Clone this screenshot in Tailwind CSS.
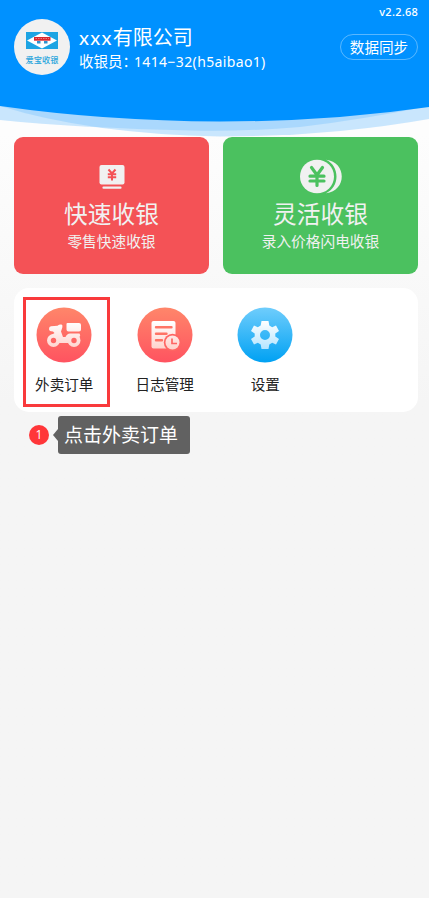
<!DOCTYPE html>
<html lang="zh-CN">
<head>
<meta charset="utf-8">
<meta name="viewport" content="width=device-width, initial-scale=1">
<title>收银</title>
<script src="https://cdn.jsdelivr.net/npm/@tailwindcss/browser@4"></script>
</head>
<body class="relative h-[898px] w-[429px] overflow-hidden bg-linear-to-b from-[#fdfdfd] from-15% to-[#f5f5f5] to-45% font-['Lato','Noto_Sans_CJK_SC',sans-serif]">
<header class="relative h-[137px] text-white">
  <svg class="absolute inset-0" width="429" height="140" viewBox="0 0 429 140">
    <path d="M0 0H429V106Q360 120 300 127Q240 132 190 130.500Q80 128 0 120Z" fill="#80c6fc" fill-opacity=".42"/>
    <path d="M0 0H429V119Q330 136.500 220 136.500Q90 134 0 106Z" fill="#80c6fc" fill-opacity=".42"/>
    <path d="M0 0H429V107Q330 121.500 220 121.500Q105 121 0 106Z" fill="#0091ff"/>
  </svg>
  <div class="relative flex items-start pl-[14px] pt-[19px]">
    <div class="flex size-[56px] shrink-0 flex-col items-center rounded-full bg-[#f1f1f1] pt-[13px]">
      <svg width="32" height="17" viewBox="0 0 32 17">
        <path d="M0 0H32V17H0Z" fill="#1da4e3"/>
        <path d="M1 8.500L16 .5L31 8.500L16 16.500Z" fill="#fff"/>
        <path d="M8 5H24.500V8.700H8Z" fill="#d9282f"/>
        <path d="M9.500 6.500H23" stroke="#ee7f7c" stroke-width="1" stroke-dasharray="1.500 1"/>
        <path d="M11 9H14.500V11.500H11ZM18 9H21.500V11.500H18Z" fill="#2f93d0"/>
      </svg>
      <span class="mt-[6px] text-[8.200px] font-medium leading-[11px] text-[#2aa5dc]">爱宝收银</span>
    </div>
    <div class="ml-[9px] mt-[5px] w-[230px] whitespace-nowrap">
      <div class="flex text-[20px] leading-[26px]"><span class="tracking-[1.300px]">xxx</span><span>有限公司</span></div>
      <div class="mt-[1px] flex text-[14.500px] leading-[22px]"><span class="w-[55px]">收银员：</span><span class="font-['Noto_Sans'] text-[14px] tracking-[.36px]">1414−32(h5aibao1)</span></div>
    </div>
    <div class="ml-auto mr-[11px] flex flex-col items-end">
      <span class="-mt-[15px] font-['Noto_Sans'] text-[11px] font-medium leading-[16px] tracking-[.25px]">v2.2.68</span>
      <button class="mt-[14px] h-[26px] w-[78px] rounded-full border border-white/35 text-[14.600px] leading-[25px]">数据同步</button>
    </div>
  </div>
</header>

<main class="relative pl-[14px] pr-[11px] text-[#f1f1f1]">
  <section class="grid grid-cols-2 gap-[14px]">
    <div class="flex h-[137px] flex-col items-center rounded-[9px] bg-[#f45256] pt-[22px]">
      <svg width="36" height="36" viewBox="0 0 36 36" fill="none">
        <rect x="5.500" y="6" width="25" height="19.500" rx="2" fill="#f1f1f1"/>
        <path d="M9.500 28.700H26.500" stroke="#f1f1f1" stroke-width="2.200" stroke-linecap="round"/>
        <path d="M14.500 10.500L18 14.500L21.500 10.500M18 14.500V21.500M13.800 15.200H22.200M13.800 18.300H22.200" stroke="#f45256" stroke-width="2"/>
      </svg>
      <span class="mt-[2px] text-[23.700px] leading-[34px]">快速收银</span>
      <span class="-mt-[1px] text-[14.700px] leading-[22px]">零售快速收银</span>
    </div>
    <div class="flex h-[137px] flex-col items-center rounded-[9px] bg-[#4bc15f] pt-[22px]">
      <svg width="42" height="36" viewBox="0 0 42 36" fill="none">
        <path d="M26 .8C47 3 47 32 26 34.200C40 28 40 7 26 .8Z" fill="#f1f1f1"/>
        <ellipse cx="17" cy="17.500" rx="17" ry="16.800" fill="#f1f1f1"/>
        <path d="M11.500 8.500L17 16L22.500 8.500M17 16V26.500M10 17.200H24M10 22H24" stroke="#4bc15f" stroke-width="3.200" stroke-linecap="round"/>
      </svg>
      <span class="mt-[2px] text-[23.700px] leading-[34px]">灵活收银</span>
      <span class="-mt-[1px] text-[14.700px] leading-[22px]">录入价格闪电收银</span>
    </div>
  </section>

  <section class="mt-[14px] grid h-[124px] grid-cols-4 rounded-[15px] bg-white pr-[2px] pt-[19px] text-[14.600px] text-[#222]">
    <div class="flex flex-col items-center">
      <svg width="56" height="56" viewBox="0 0 56 56" fill="none">
        <defs>
          <linearGradient id="coral" x2="0" y2="1"><stop stop-color="#ff866a"/><stop offset="1" stop-color="#ff5360"/></linearGradient>
          <linearGradient id="cream" gradientUnits="userSpaceOnUse" x1="0" y1="15" x2="0" y2="42"><stop stop-color="#fff"/><stop offset="1" stop-color="#ffd2cc"/></linearGradient>
        </defs>
        <circle cx="28" cy="28" r="27.500" fill="url(#coral)"/>
        <path d="M31.500 16H43Q45 16 45 18V22.500Q45 24.500 43 24.500H32.500Q30.500 24.500 30.500 22.500V17Q30.500 16 31.500 16ZM15 19.200L21.500 18.700Q23.500 17 25.500 17.500Q27 18 26.300 20.500L25 24.500L27 30H29.500Q31 26.500 34 26.500H43.500Q45 28 43.500 30L44 34H12L12.500 30L18.500 26L17 24.500Q13 24.500 13 22Q13 19.500 15 19.200ZM22 30H33V36H22Z" fill="url(#cream)"/>
        <circle cx="17.500" cy="33.500" r="6.500" fill="url(#cream)"/><circle cx="38" cy="33.500" r="6.500" fill="url(#cream)"/>
        <circle cx="17.500" cy="33.500" r="2.700" fill="#ff6664"/><circle cx="38" cy="33.500" r="2.700" fill="#ff6664"/>
      </svg>
      <span class="mt-[9px] leading-[25px]">外卖订单</span>
    </div>
    <div class="flex flex-col items-center">
      <svg width="56" height="56" viewBox="0 0 56 56" fill="none">
        <circle cx="28" cy="28" r="27.500" fill="url(#coral)"/>
        <path d="M16.500 14H36.500Q38.500 14 38.500 16V41.500H16.500Q14.500 41.500 14.500 39.500V16Q14.500 14 16.500 14Z" fill="url(#cream)"/>
        <path d="M19 20.200H34.500M19 26.700H29.500M19 33.200H25" stroke="#ff7466" stroke-width="2.400" stroke-linecap="round"/>
        <circle cx="35.500" cy="35.500" r="8.700" fill="#ff6563"/>
        <circle cx="35.500" cy="35.500" r="7" fill="url(#cream)"/>
        <path d="M35 31.500V36.500H40" stroke="#ff6563" stroke-width="1.700"/>
      </svg>
      <span class="mt-[9px] leading-[25px]">日志管理</span>
    </div>
    <div class="flex flex-col items-center">
      <svg width="56" height="56" viewBox="0 0 56 56" fill="none">
        <defs>
          <linearGradient id="sky" x2="0" y2="1"><stop stop-color="#6fcdfc"/><stop offset="1" stop-color="#00a1f3"/></linearGradient>
          <linearGradient id="ice" gradientUnits="userSpaceOnUse" x1="0" y1="14" x2="0" y2="42"><stop stop-color="#fff"/><stop offset="1" stop-color="#b4e5ff"/></linearGradient>
        </defs>
        <circle cx="28" cy="28" r="27.500" fill="url(#sky)"/>
        <path fill-rule="evenodd" d="M24.500 14H31.500L32.300 18.500L35.200 20.200L39 18.500L42 24L38.300 26.400V29.600L42 32L39 37.500L35.200 35.800L32.300 37.500L31.500 42H24.500L23.700 37.500L20.800 35.800L17 37.500L14 32L17.700 29.600V26.400L14 24L17 18.500L20.800 20.200L23.700 18.500ZM28 23A5 5 0 1 0 28 33A5 5 0 1 0 28 23Z" fill="url(#ice)"/>
      </svg>
      <span class="mt-[9px] leading-[25px]">设置</span>
    </div>
  </section>
</main>

<div class="absolute left-[23px] top-[297px] h-[110px] w-[87px] border-3 border-[#f93a3c]"></div>
<div class="absolute left-[29px] top-[416px] flex items-center text-white">
  <span class="size-[20px] rounded-full bg-[#ff3639] text-center font-['Open_Sans'] text-[12px] leading-[20px]">1</span>
  <svg class="ml-[4px]" width="5" height="12" viewBox="0 0 5 12"><path d="M5 0V12L0 6Z" fill="#616161"/></svg>
  <span class="h-[38px] w-[132px] whitespace-nowrap rounded-[3px] bg-[#616161] pl-[6px] text-[19px] leading-[38px]">点击外卖订单</span>
</div>
</body>
</html>
